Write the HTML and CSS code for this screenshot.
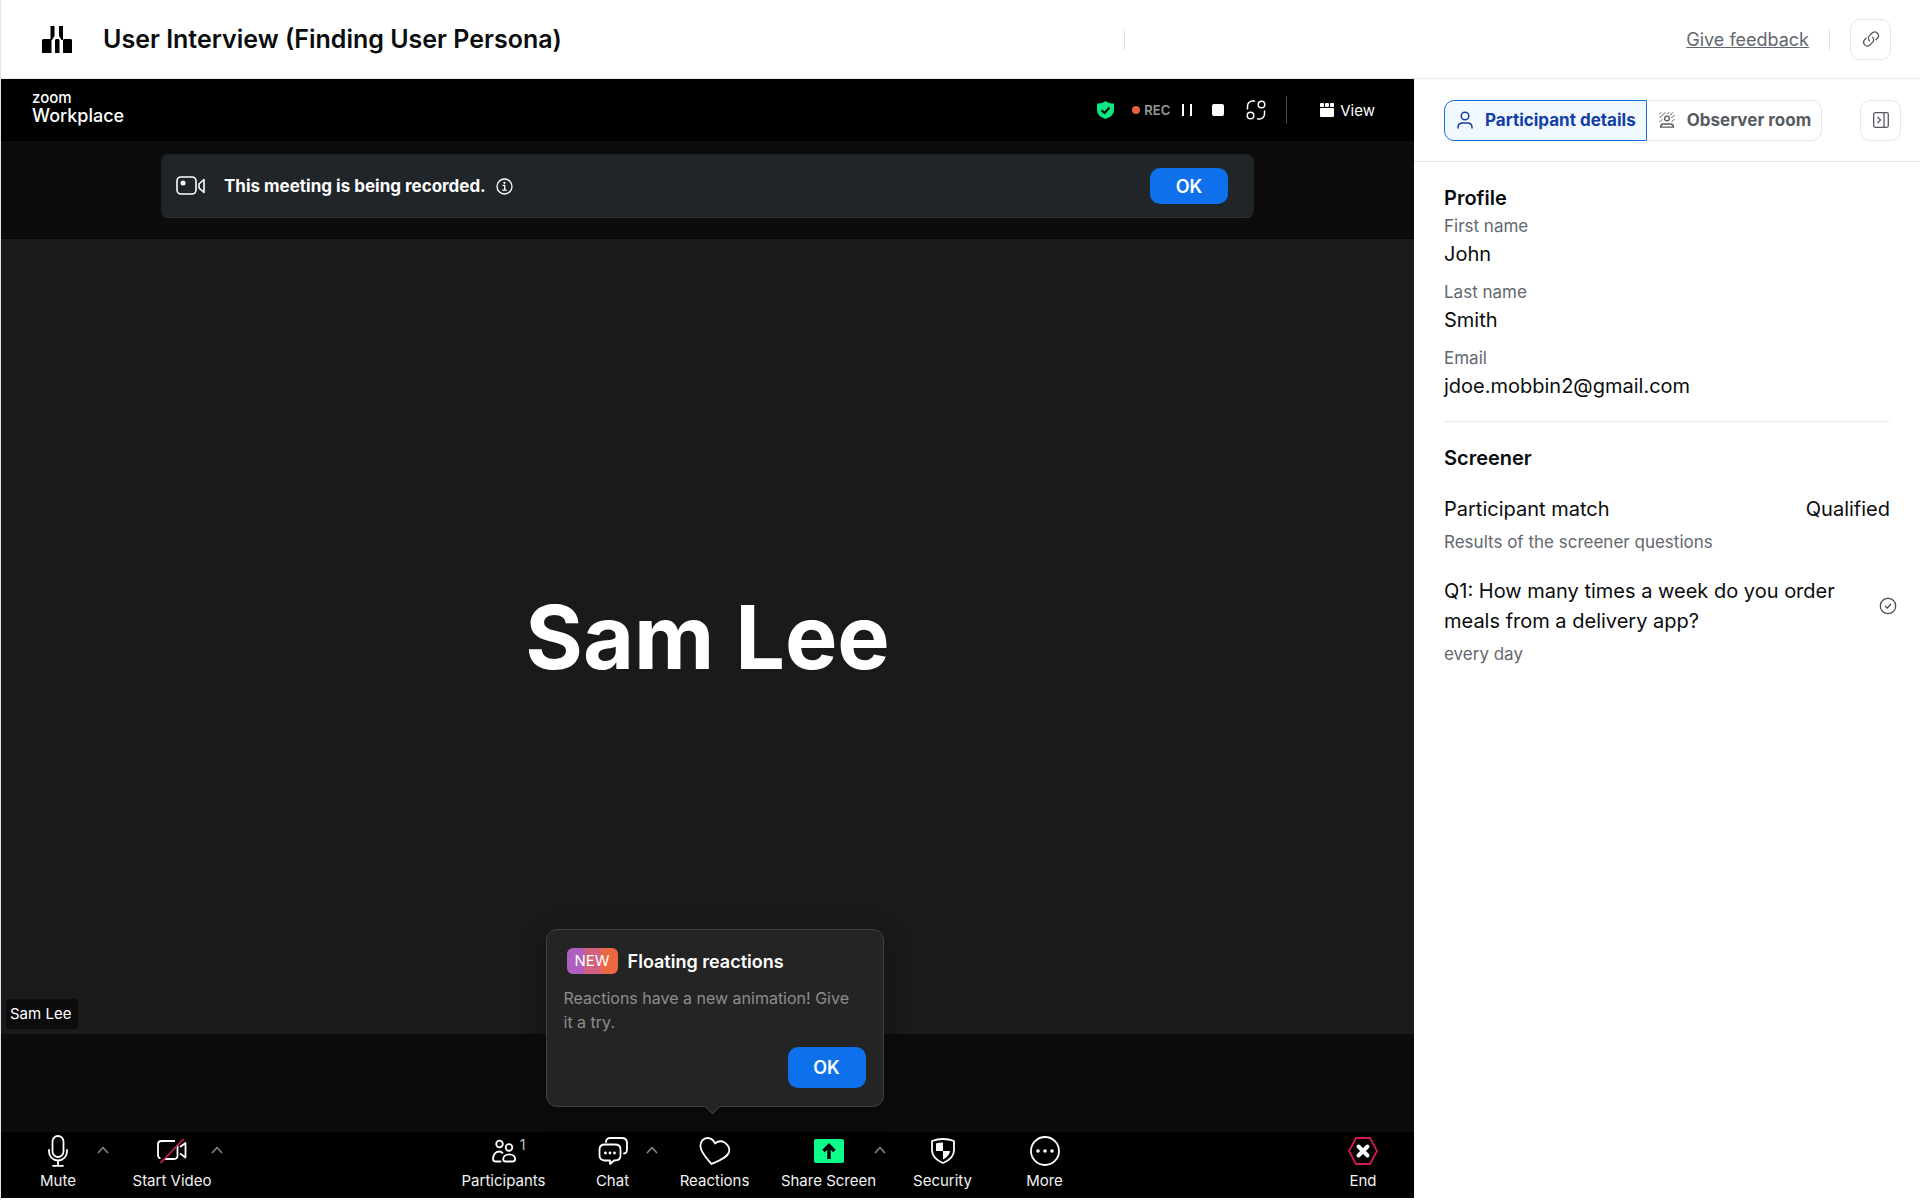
FILE: index.html
```html
<!DOCTYPE html>
<html lang="en">
<head>
  <meta charset="UTF-8" />
  <meta name="viewport" content="width=device-width, initial-scale=1.0"/>
  <title>User Interview (Finding User Persona)</title>
  <link rel="stylesheet" href="styles.css">
</head>
<body>
  <header class="topbar">
    <svg class="logo" width="30" height="27" viewBox="0 0 30 27" fill="#000">
      <path d="M8.500 0h4v10L10 14H8.500zM17 0h4v14h-1.500L17 10zM0 14l1-1h7.500l1 1v13H0zM13 14l1-1h2.500l1 1v13H13zM21 14l1-1h7l1 1v13h-9z"/>
    </svg>
    <h1>User Interview (Finding User Persona)</h1>
    <span class="divider divider-mid"></span>
    <a href="#" class="feedback">Give feedback</a>
    <span class="divider"></span>
    <button class="icon-btn" aria-label="Copy link">
      <svg width="18" height="18" viewBox="0 0 24 24" fill="none" stroke="#565b62" stroke-width="1.8" stroke-linecap="round" stroke-linejoin="round">
        <path d="M10 14.500a5 5 0 0 1 0-7l3.800-3.800a5 5 0 0 1 7 7L18.600 13"/>
        <path d="M14 9.500a5 5 0 0 1 0 7l-3.800 3.800a5 5 0 0 1-7-7L5.400 11"/>
      </svg>
    </button>
  </header>

  <div class="layout">
    <main class="meeting">
      <div class="meeting-head">
        <div class="brand">
          <span class="brand-zoom">zoom</span>
          <span class="brand-name">Workplace</span>
        </div>
        <svg class="shield" width="17" height="18" viewBox="0 0 17 18">
          <path d="M8.500 0C6 2 3.500 2.600 0 2.600V9c0 4.500 4 7.500 8.500 9 4.500-1.500 8.500-4.500 8.500-9V2.600C13.500 2.600 11 2 8.500 0z" fill="#0be881"/>
          <path d="M4.500 9.200l3 2.800 5-5.500" fill="none" stroke="#000" stroke-width="2"/>
        </svg>
        <span class="rec"><i class="rec-dot"></i>REC</span>
        <button class="head-btn pause" aria-label="Pause recording">
          <svg width="10" height="12" viewBox="0 0 10 12" fill="#fff"><path d="M0 0h2v12H0zM8 0h2v12H8z"/></svg>
        </button>
        <button class="head-btn stop" aria-label="Stop recording">
          <svg width="12" height="12" viewBox="0 0 12 12"><rect width="12" height="12" rx="2" fill="#fff"/></svg>
        </button>
        <button class="head-btn apps" aria-label="Apps">
          <svg width="20" height="20" viewBox="0 0 20 20" fill="none" stroke="#fff" stroke-width="1.500" stroke-linecap="round">
            <circle cx="15.500" cy="4.500" r="3.300"/>
            <circle cx="4.500" cy="15.500" r="3.300"/>
            <path d="M1.500 9V6a5 5 0 0 1 5-5h2M18.500 11v3a5 5 0 0 1-5 5h-2"/>
          </svg>
        </button>
        <span class="head-line"></span>
        <button class="head-btn view">
          <svg width="14" height="14" viewBox="0 0 14 14" fill="#fff">
            <rect width="4" height="4" rx="1"/><rect x="5" width="4" height="4" rx="1"/><rect x="10" width="4" height="4" rx="1"/>
            <rect y="5" width="14" height="9" rx="1"/>
          </svg>
          View
        </button>
      </div>

      <div class="banner-wrap">
        <div class="banner">
          <svg width="30" height="20" viewBox="0 0 30 20" fill="none" stroke="#fff" stroke-width="1.600" stroke-linejoin="round">
            <rect x="1" y="1" width="19" height="17" rx="4"/>
            <path d="M23 8l5-4.500v13L23 12z"/>
            <circle cx="7" cy="7" r="2.500" fill="#fff" stroke="none"/>
          </svg>
          <p>This meeting is being recorded.</p>
          <svg width="17" height="17" viewBox="0 0 17 17" fill="none" stroke="#fff" stroke-width="1.300">
            <circle cx="8.500" cy="8.500" r="7.500"/>
            <path d="M6.500 7.300h2.200V12M6.300 12.200h4.500"/>
            <circle cx="8.400" cy="4.800" r="1.100" fill="#fff" stroke="none"/>
          </svg>
          <button class="ok-btn">OK</button>
        </div>
      </div>

      <div class="stage">
        <div class="stage-name">Sam Lee</div>
        <span class="name-tag">Sam Lee</span>
      </div>

      <div class="stage-foot"></div>

      <div class="toolbar">
        <div class="tool-group">
          <div class="tool tool-left">
            <button class="tool-btn">
              <svg width="20" height="32" viewBox="0 0 20 32" fill="none" stroke="#fff" stroke-width="1.800" stroke-linecap="round">
                <rect x="4.500" y="1" width="11" height="21" rx="5.500"/>
                <path d="M1 15v1.500a9 9 0 0 0 18 0V15M10 26v4.500M5 30.800h10"/>
              </svg>
              Mute
            </button>
            <button class="caret" aria-label="Audio options"><svg width="12" height="8" viewBox="0 0 12 8"><path d="M1 7l5-5.500L11 7"/></svg></button>
          </div>
          <div class="tool tool-left">
            <button class="tool-btn">
              <svg width="30" height="26" viewBox="0 0 30 26" fill="none" stroke="#fff" stroke-width="1.800" stroke-linejoin="round">
                <path d="M3.500 20.500C1.800 20 1 19 1 17V6.500C1 3.800 2 3 4.500 3H18M20.500 7v10.500c0 2.700-1 3.500-3.500 3.500H7.500M23 9l5.500-4v14.500L23 15.500"/>
                <path d="M3.500 25L26.500 1" stroke="#c81e50"/>
              </svg>
              Start Video
            </button>
            <button class="caret" aria-label="Video options"><svg width="12" height="8" viewBox="0 0 12 8"><path d="M1 7l5-5.500L11 7"/></svg></button>
          </div>
        </div>

        <div class="tool-group">
          <div class="tool tool-mid">
            <button class="tool-btn">
              <svg width="24" height="24" viewBox="0 0 24 24" fill="none" stroke="#fff" stroke-width="1.800" stroke-linecap="round">
                <circle cx="7.500" cy="5" r="3.300"/>
                <circle cx="17" cy="8.500" r="3.300"/>
                <path d="M8.500 22.500H4c-2 0-3-1-3-2.500 0-4 2.500-7.500 6-7.500 1.500 0 2.800.5 3.500 1.300"/>
                <path d="M14 22.500c-1.800 0-2.800-1-2.800-2.300 0-2.700 2.500-4.900 6-4.900s6 2.200 6 4.900c0 1.300-1 2.300-2.800 2.300z"/>
              </svg>
              Participants
            </button>
            <span class="count">1</span>
          </div>
          <div class="tool">
            <button class="tool-btn">
              <svg width="30" height="28" viewBox="0 0 30 28" fill="none" stroke="#fff" stroke-width="1.800" stroke-linecap="round" stroke-linejoin="round">
                <path d="M8 5c0-2.500 1.500-4 4-4h11.500c3.500 0 5.500 1.500 5.500 5v6c0 3-1 4.500-3 4.500"/>
                <path d="M7 7.500h10c3.500 0 5.500 2 5.500 5v6c0 3-2 5-5.500 5h-1L12 27v-3.500H7c-3.500 0-5.500-2-5.500-5v-6c0-3 2-5 5.500-5z"/>
                <g fill="#fff" stroke="none"><circle cx="7.500" cy="16" r="1.400"/><circle cx="12" cy="16" r="1.400"/><circle cx="16.500" cy="16" r="1.400"/></g>
              </svg>
              Chat
            </button>
            <button class="caret" aria-label="Chat options"><svg width="12" height="8" viewBox="0 0 12 8"><path d="M1 7l5-5.500L11 7"/></svg></button>
          </div>
          <div class="tool">
            <button class="tool-btn">
              <svg width="32" height="28" viewBox="0 0 32 28" fill="none" stroke="#fff" stroke-width="1.800" stroke-linejoin="round">
                <path d="M12.500 27C8 21.500 2 16 1.500 9.500 1 4.500 4.500 1 8.500 1c3.500 0 6 2 7.500 5.500 2.500-2.200 6.500-2.700 9.500-1 3.500 2 5.500 6 4.500 9.500-1.500 5.500-10.500 9-17.500 12z"/>
              </svg>
              Reactions
            </button>
            <div class="popup" role="dialog" aria-label="Floating reactions">
              <div class="popup-title"><span class="new-badge">NEW</span><h2>Floating reactions</h2></div>
              <p>Reactions have a new animation! Give it a try.</p>
              <button class="ok-btn ok-tall">OK</button>
            </div>
          </div>
          <div class="tool tool-wide">
            <button class="tool-btn">
              <svg width="30" height="26" viewBox="0 0 30 26">
                <rect y="1" width="30" height="24" rx="2" fill="#0dff8a"/>
                <path d="M15 21V8M9.500 13L15 7.500l5.500 5.500" fill="none" stroke="#000" stroke-width="3.500"/>
              </svg>
              Share Screen
            </button>
            <button class="caret" aria-label="Share options"><svg width="12" height="8" viewBox="0 0 12 8"><path d="M1 7l5-5.500L11 7"/></svg></button>
          </div>
          <div class="tool">
            <button class="tool-btn">
              <svg width="24" height="26" viewBox="0 0 24 26" fill="none" stroke="#fff" stroke-width="1.800" stroke-linejoin="round">
                <path d="M12 1C8.500 1 5 1.500 1 3v9c0 6 5 10.500 11 13 6-2.500 11-7 11-13V3c-4-1.500-7.500-2-11-2z"/>
                <path d="M12 4.500V13H5V5.500c2.500-.7 5-1 7-1zM12 13h7c-.5 4-3.500 6.500-7 8.500z" fill="#fff" stroke="none"/>
              </svg>
              Security
            </button>
          </div>
          <div class="tool">
            <button class="tool-btn">
              <svg width="30" height="30" viewBox="0 0 30 30" fill="none" stroke="#fff" stroke-width="1.800">
                <circle cx="15" cy="15" r="14"/>
                <g fill="#fff" stroke="none"><circle cx="8" cy="15" r="1.800"/><circle cx="15" cy="15" r="1.800"/><circle cx="22" cy="15" r="1.800"/></g>
              </svg>
              More
            </button>
          </div>
        </div>

        <div class="tool">
          <button class="tool-btn">
            <svg width="30" height="28" viewBox="0 0 30 28" fill="none">
              <path d="M8 1h14l7 13-7 13H8L1 14z" stroke="#d11b56" stroke-width="1.800"/>
              <path d="M10.500 9.500l9 9M19.500 9.500l-9 9" stroke="#fff" stroke-width="4" stroke-linecap="round"/>
            </svg>
            End
          </button>
        </div>
      </div>
    </main>

    <aside class="sidebar">
      <div class="sidebar-head">
        <div class="tabs">
          <button class="tab tab-active">
            <svg width="16" height="18" viewBox="0 0 16 18" fill="none" stroke="currentColor" stroke-width="1.500">
              <circle cx="8" cy="5" r="3.800"/>
              <path d="M1 17.500v-1c0-3 2-4.500 4.500-4.500h5c2.500 0 4.500 1.500 4.500 4.500v1"/>
            </svg>
            Participant details
          </button>
          <button class="tab">
            <svg width="16" height="16" viewBox="0 0 16 16" fill="none" stroke="currentColor" stroke-width="1">
              <circle cx="8" cy="6.500" r="2.400" stroke-width="1.300"/>
              <path d="M1.500 15.200c0-2 1-3.200 3-3.200h7c2 0 3 1.200 3 3.200z" stroke-width="1.300"/>
              <path d="M.3 2.300l2-2M.3 6.300l6-6M.3 10.300l3-3M8 2.300l2-2M11 3.300l3-3M12.500 6l3.200-3.200M12.500 10l3.200-3.200"/>
            </svg>
            Observer room
          </button>
        </div>
        <button class="icon-btn" aria-label="Collapse panel">
          <svg width="16" height="16" viewBox="0 0 16 16" fill="none" stroke="#565b62" stroke-width="1.300">
            <rect x=".7" y=".7" width="14.600" height="14.600" rx="1.500"/>
            <path d="M11 1v14M4.500 5l3 3-3 3"/>
          </svg>
        </button>
      </div>

      <section class="profile">
        <h2>Profile</h2>
        <dl>
          <dt>First name</dt>
          <dd>John</dd>
          <dt>Last name</dt>
          <dd>Smith</dd>
          <dt>Email</dt>
          <dd>jdoe.mobbin2@gmail.com</dd>
        </dl>
      </section>

      <section class="screener">
        <h2>Screener</h2>
        <div class="match"><span>Participant match</span><span>Qualified</span></div>
        <p class="hint">Results of the screener questions</p>
        <div class="question">
          <p>Q1: How many times a week do you order meals from a delivery app?</p>
          <svg width="18" height="18" viewBox="0 0 18 18" fill="none" stroke="#4a4f57" stroke-width="1.300">
            <circle cx="9" cy="9" r="7.700"/>
            <path d="M6 9l2.300 2L12 7"/>
          </svg>
        </div>
        <p class="hint">every day</p>
      </section>
    </aside>
  </div>
</body>
</html>
```
FILE: styles.css
```css
* {
  box-sizing: border-box;
}

body {
  margin: 0;
  min-height: 100vh;
  display: flex;
  flex-direction: column;
  background: #fff;
  color: #0b0c0e;
  font-family: Inter, "Liberation Sans", sans-serif;
  border-left: 1px solid #e2e3e5;
}

h1, h2, p, dl, dd {
  margin: 0;
}

button {
  font-family: inherit;
  cursor: pointer;
}

svg {
  flex: none;
}

/* Top bar */
.topbar {
  display: flex;
  align-items: center;
  height: 79px;
  padding: 0 29px 0 41px;
  border-bottom: 1px solid #e9eaec;
}

.topbar h1 {
  margin-left: 31px;
  font-size: 25px;
  font-weight: 600;
}

.divider {
  width: 1px;
  height: 21px;
  background: #dfe1e4;
}

.divider-mid {
  margin-left: auto;
}

.feedback {
  margin-left: auto;
  margin-right: 20px;
  font-size: 18px;
  color: #63676e;
}

.icon-btn {
  display: flex;
  align-items: center;
  justify-content: center;
  width: 41px;
  height: 41px;
  padding: 0;
  background: #fff;
  border: 1px solid #e4e6e9;
  border-radius: 10px;
}

.topbar .icon-btn {
  margin-left: 20px;
}

/* Layout */
.layout {
  flex: 1;
  display: flex;
  padding-bottom: 2px;
}

.meeting {
  flex: 1;
  display: flex;
  flex-direction: column;
  min-width: 0;
  background: #0c0c0c;
  color: #fff;
}

.meeting-head {
  display: flex;
  align-items: center;
  height: 62px;
  padding: 0 39px 0 31px;
  background: #000;
}

.brand {
  display: flex;
  flex-direction: column;
  margin-right: auto;
  padding-bottom: 5px;
}

.brand-zoom {
  font-size: 15px;
  line-height: 16px;
  font-weight: 500;
}

.brand-name {
  font-size: 18px;
  line-height: 20px;
  font-weight: 500;
}

.rec {
  display: flex;
  align-items: center;
  gap: 4px;
  margin: 0 12px 0 18px;
  font-size: 13px;
  font-weight: 600;
  color: #9a9a9a;
}

.rec-dot {
  width: 8px;
  height: 8px;
  border-radius: 50%;
  background: #e5613f;
}

.head-btn {
  display: flex;
  align-items: center;
  padding: 0;
  border: none;
  background: none;
  color: #fff;
}

.stop {
  margin: 0 22px 0 20px;
}

.head-line {
  width: 1px;
  height: 28px;
  margin: 0 33px 0 20px;
  background: #444;
}

.view {
  gap: 6px;
  font-size: 15px;
}

.banner-wrap {
  height: 98px;
  padding: 13px 160px 0;
  border-bottom: 1px solid #050505;
}

.banner {
  display: flex;
  align-items: center;
  height: 64px;
  padding: 0 25px 0 14px;
  background: #20252a;
  border: 1px solid #1c2023;
  border-bottom-color: #2b2f33;
  border-radius: 7px;
}

.banner p {
  margin: 0 10px 0 18px;
  font-size: 17px;
  font-weight: 700;
}

.ok-btn {
  width: 78px;
  height: 36px;
  padding: 0;
  border: none;
  border-radius: 10px;
  background: #0e71eb;
  color: #fff;
  font-size: 18px;
  font-weight: 600;
}

.banner .ok-btn {
  margin-left: auto;
}

.popup .ok-tall {
  align-self: flex-end;
  height: 41px;
}

/* Stage */
.stage {
  position: relative;
  flex: 1;
  display: flex;
  align-items: center;
  justify-content: center;
  background: #1a1a1a;
}

.stage-name {
  font-size: 88px;
  font-weight: 700;
}

.name-tag {
  position: absolute;
  left: 5px;
  bottom: 5px;
  padding: 0 7px 0 4px;
  border-radius: 4px;
  background: #0c0c0c;
  font-size: 15px;
  line-height: 30px;
}

.stage-foot {
  height: 98px;
}

/* Toolbar */
.toolbar {
  display: flex;
  justify-content: space-between;
  height: 66px;
  background: #000;
}

.tool-group {
  display: flex;
}

.tool {
  position: relative;
  width: 102px;
}

.tool-left {
  width: 114px;
}

.tool-mid {
  width: 116px;
}

.tool-wide {
  width: 126px;
}

.tool-btn {
  display: grid;
  grid-template-rows: 38px 20px;
  align-items: center;
  justify-items: center;
  width: 100%;
  padding: 0;
  border: none;
  background: none;
  color: #f2f2f2;
  font-size: 15px;
}

.caret {
  position: absolute;
  top: 10px;
  right: 6px;
  display: flex;
  padding: 4px 0;
  border: none;
  background: none;
}

.caret path {
  fill: none;
  stroke: #8a8a8a;
  stroke-width: 1.5;
}

.count {
  position: absolute;
  top: 4px;
  right: 36px;
  font-size: 14px;
  color: #c4c4c4;
}

/* Reactions popup */
.popup {
  position: absolute;
  left: 50%;
  bottom: 91px;
  transform: translateX(-50%);
  display: flex;
  flex-direction: column;
  width: 338px;
  padding: 18px 17px;
  background: #242424;
  border: 1px solid #414141;
  border-radius: 11px;
  box-shadow: 0 4px 24px rgba(0, 0, 0, 0.3);
}

.popup::after {
  content: "";
  position: absolute;
  left: 160px;
  bottom: -6px;
  width: 10px;
  height: 10px;
  background: #242424;
  border: solid #414141;
  border-width: 0 1px 1px 0;
  transform: rotate(45deg);
}

.popup-title {
  display: flex;
  align-items: center;
  gap: 10px;
  padding-left: 3px;
}

.popup h2 {
  font-size: 18px;
  font-weight: 600;
}

.new-badge {
  padding: 0 8px;
  border-radius: 6px;
  background: linear-gradient(90deg, #b05fc0 33%, #d2607f 33%, #d2607f 66%, #ec6843 66%);
  font-size: 15px;
  line-height: 26px;
}

.popup p {
  max-width: 296px;
  margin: 12px 0 13px;
  font-size: 16px;
  line-height: 24px;
  color: #8d8d8d;
}

/* Sidebar */
.sidebar {
  width: 506px;
  font-size: 20px;
  line-height: 30px;
}

.sidebar-head {
  display: flex;
  align-items: center;
  justify-content: space-between;
  height: 83px;
  padding: 0 19px 0 30px;
  border-bottom: 1px solid #e4e6e8;
}

.tabs {
  display: flex;
}

.tab {
  display: flex;
  align-items: center;
  gap: 12px;
  height: 41px;
  padding: 0 10px 0 12px;
  background: #fff;
  border: 1px solid #e4e6e9;
  border-left: none;
  border-radius: 0 10px 10px 0;
  color: #565b62;
  font-size: 17px;
  font-weight: 700;
}

.tab-active {
  background: #f1f9ff;
  border: 1px solid #1a6fd6;
  border-radius: 10px 0 0 10px;
  color: #123ea8;
}

.sidebar h2 {
  font-size: 20px;
  font-weight: 600;
}

.profile {
  margin: 0 30px;
  padding: 21px 0 20px;
  border-bottom: 1px solid #e9eaec;
}

.profile dt,
.hint {
  font-size: 17px;
  line-height: 26px;
  color: #63676e;
}

.profile dd {
  margin: 0 0 10px;
}

.profile dd:last-child {
  margin-bottom: 0;
}

.screener {
  padding: 21px 30px;
}

.match {
  display: flex;
  justify-content: space-between;
  margin: 21px 0 5px;
}

.question {
  display: flex;
  align-items: center;
  justify-content: space-between;
  margin: 21px -7px 5px 0;
}

.question p {
  max-width: 400px;
}
```
